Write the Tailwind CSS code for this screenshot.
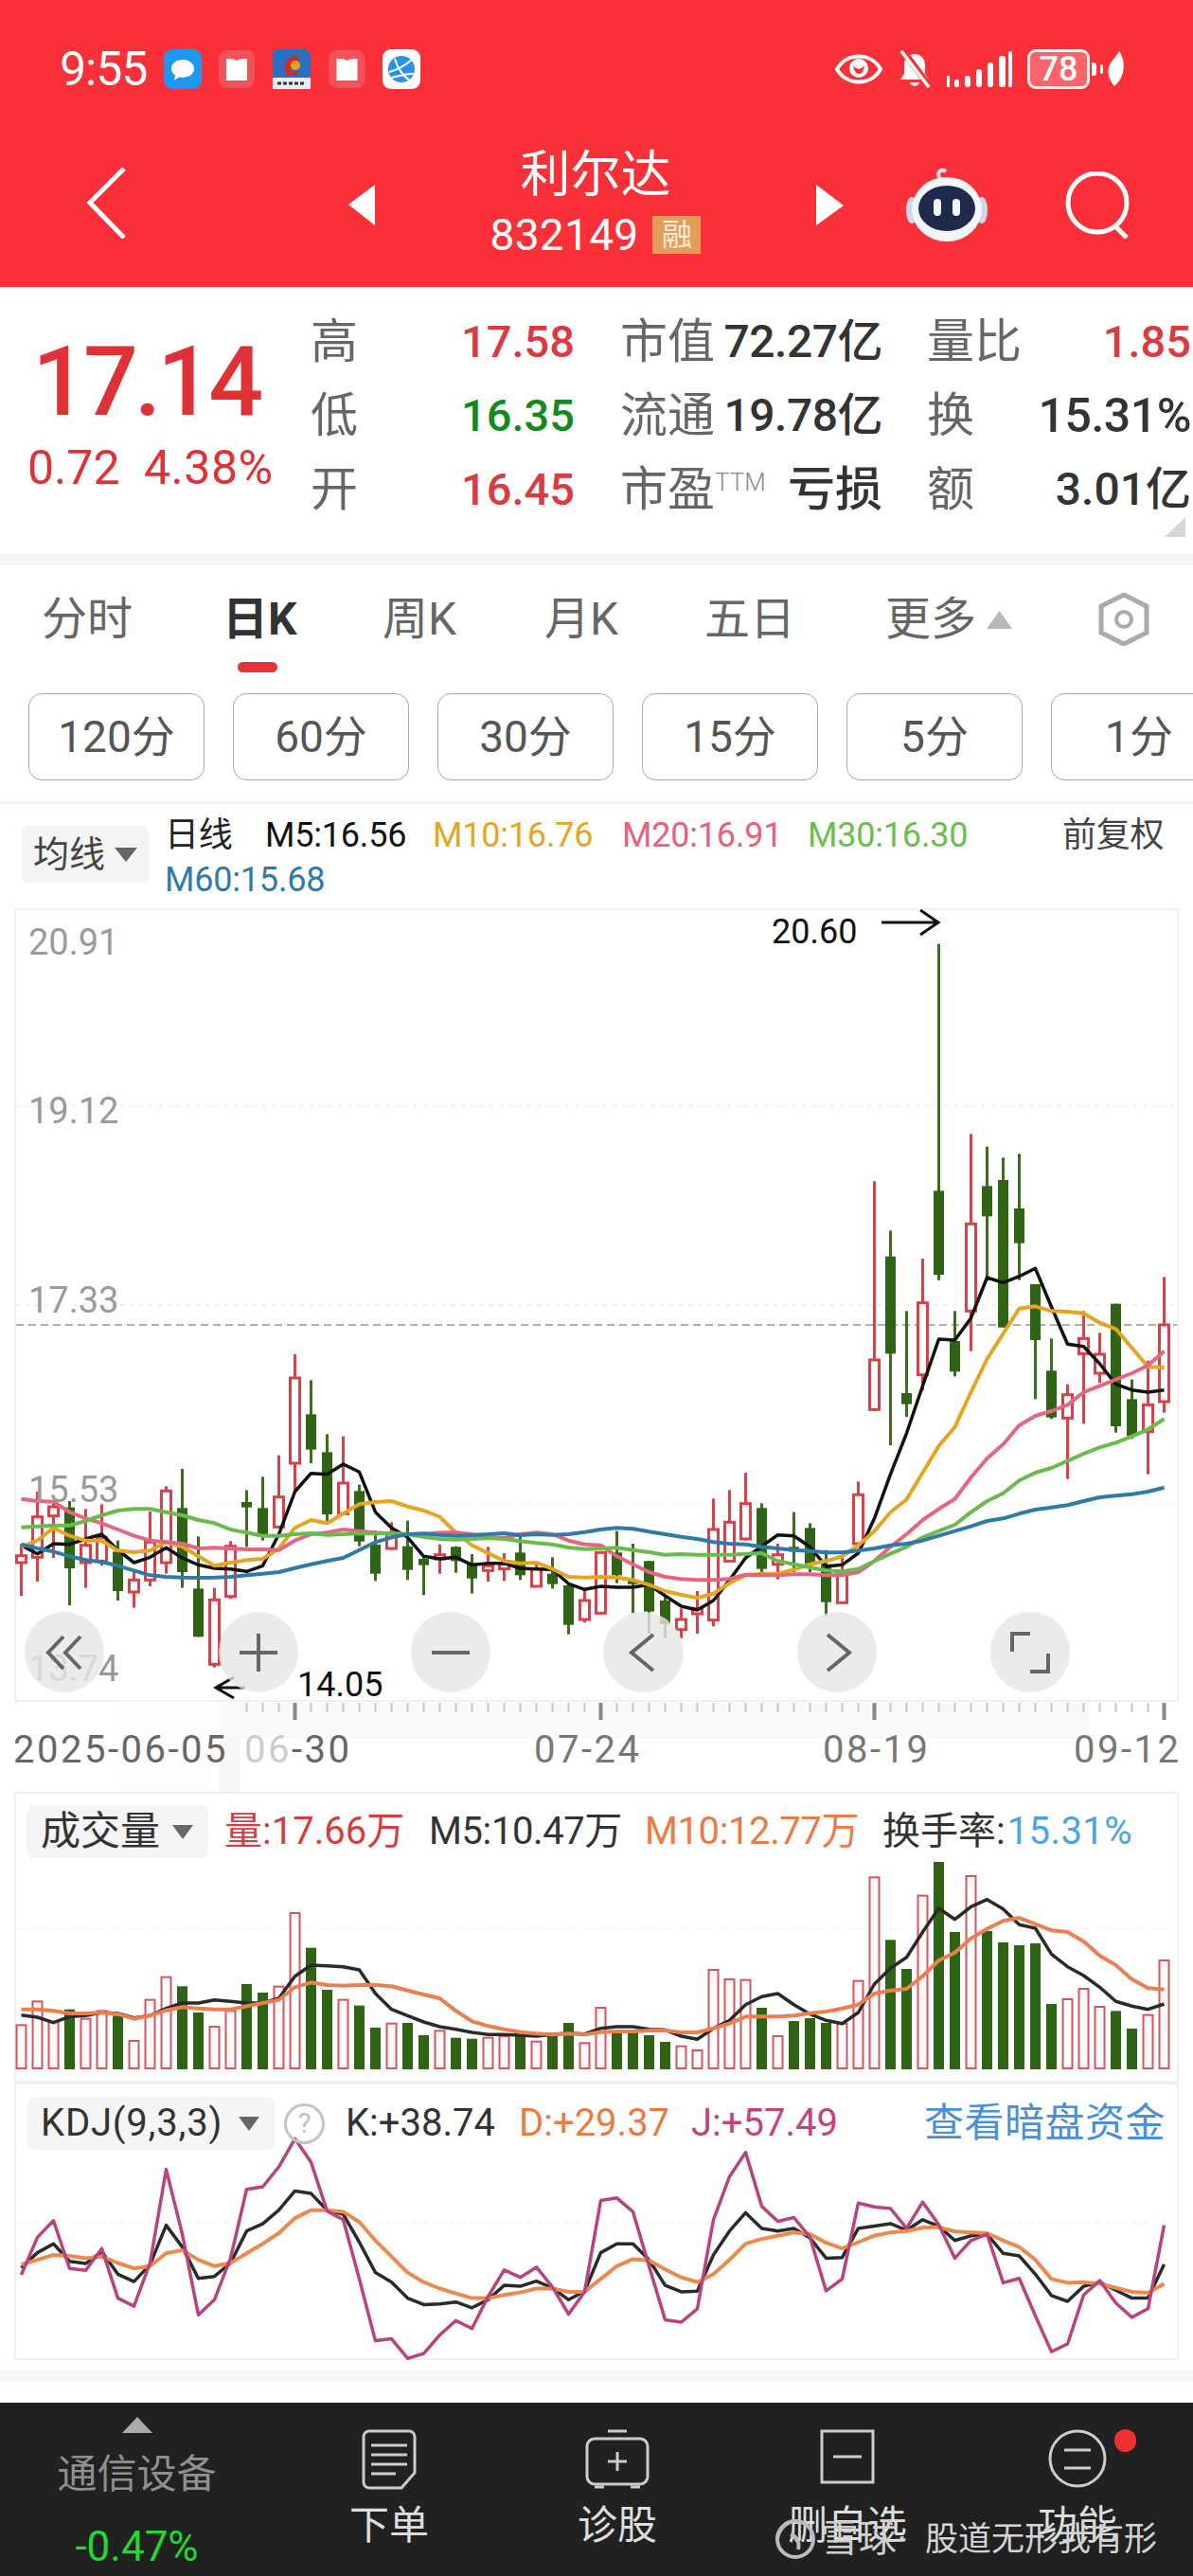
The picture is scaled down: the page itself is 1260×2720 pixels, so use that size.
<!doctype html>
<html lang="zh">
<head>
<meta charset="UTF-8" />
<meta name="viewport" content="width=device-width, initial-scale=1.0" />
<title>利尔达 832149</title>
<script src="https://cdn.jsdelivr.net/npm/@tailwindcss/browser@4"></script>
</head>
<body class="w-[1260px] h-[2720px] overflow-hidden bg-white font-[Roboto,'Noto_Sans_CJK_SC',sans-serif]">

<!-- red header -->
<header class="h-[303px] bg-[#fa3039] text-white">
  <div class="flex h-[146px] items-center">
    <span class="ml-[63px] w-[110px] text-[50px] leading-none tracking-[-1px]">9:55</span>
    <svg class="w-[40px] h-[42px]" viewBox="0 0 40 42"><rect width="40" height="42" rx="9" fill="#1d97f0"/><path d="M20 11c-7 0-12 4-12 9.500 0 3 1.500 5.500 4 7l-1 5 6-3c1 .2 2 .3 3 .3 7 0 12-4 12-9.300S27 11 20 11z" fill="#fff"/></svg>
    <svg class="ml-[18px] w-[38px] h-[40px]" viewBox="0 0 38 40"><rect width="38" height="40" rx="9" fill="#f4525a"/><path d="M8 9c4 0 8 0 11 2 3-2 7-2 11-2v23H8z" fill="#fff"/></svg>
    <svg class="ml-[19px] w-[40px] h-[42px]" viewBox="0 0 40 42"><rect width="40" height="42" rx="6" fill="#2a6fc0"/><rect y="30" width="40" height="12" fill="#e8eef5"/><path d="M26 6C14 8 10 18 14 25c4 5 12 3 15-3-4 3-9 3-10-1-1-5 4-9 9-8z" fill="#d42a20"/><circle cx="24" cy="17" r="5" fill="#f0a020"/><path d="M5 36h30" stroke="#333" stroke-width="3" stroke-dasharray="4 2"/></svg>
    <svg class="ml-[19px] w-[39px] h-[40px]" viewBox="0 0 38 40"><rect width="38" height="40" rx="9" fill="#f4525a"/><path d="M8 9c4 0 8 0 11 2 3-2 7-2 11-2v23H8z" fill="#fff"/></svg>
    <svg class="ml-[18px] w-[40px] h-[42px]" viewBox="0 0 40 42"><rect width="40" height="42" rx="9" fill="#fff"/><circle cx="20" cy="21" r="14" fill="#2a92e8"/><path d="M7 24c8-2 18-8 24-13M13 10c2 8 8 18 16 23M9 30c8-1 16-5 24-4" stroke="#fff" stroke-width="2" fill="none"/></svg>

    <svg class="ml-[438px] w-[50px] h-[38px]" viewBox="0 0 50 38"><path d="M2 19C12 1 38 1 48 19 38 37 12 37 2 19z" fill="none" stroke="#fff" stroke-width="4"/><circle cx="25" cy="18" r="10" fill="#fff"/><path d="M19 15c4 5 8 5 12 0-1 7-3 9-6 9s-5-3-6-9z" fill="#fa3039"/></svg>
    <svg class="ml-[16px] w-[37px] h-[40px]" viewBox="0 0 37 40"><path d="M18 4c-7 0-11 5-11 12v9l-4 6h30l-4-6v-9c0-7-4-12-11-12z" fill="#fff"/><path d="M13 34c1 5 9 5 10 0z" fill="#fff"/><path d="M6 1l27 36" stroke="#fa3039" stroke-width="7"/><path d="M4 1l29 38" stroke="#fff" stroke-width="3.500"/></svg>
    <svg class="ml-[15px] w-[69px] h-[38px]" viewBox="0 0 69 38" fill="#fff"><rect x="0" y="26" width="3" height="12"/><rect x="8" y="30" width="5" height="8" rx="2"/><rect x="19" y="26" width="6" height="12" rx="3"/><rect x="31" y="19" width="6" height="19" rx="3"/><rect x="43" y="12" width="6" height="26" rx="3"/><rect x="55" y="5" width="7" height="33" rx="3"/><rect x="65" y="0" width="4" height="38" rx="2"/></svg>
    <div class="relative ml-[16px] flex h-[42px] w-[66px] items-center justify-center rounded-[9px] border-[3px] border-white/90 bg-white/25 text-[36px] font-medium leading-none">78</div>
    <span class="ml-[2px] h-[14px] w-[5px] rounded-r-[3px] bg-white"></span>
    <span class="ml-[4px] h-[10px] w-[3px] rounded-full bg-white"></span>
    <svg class="ml-[3px] w-[20px] h-[40px]" viewBox="0 0 20 40"><path d="M14 1c6 8 6 20 2 28-2 4-5 7-7 9C2 30 0 20 6 12c3-4 6-7 8-11z" fill="#fff"/></svg>
  </div>
  <div class="flex h-[157px] items-start">
    <svg class="ml-[92px] mt-[31px] w-[41px] h-[75px]" viewBox="0 0 41 75"><path d="M39 1 3 37l36 37" fill="none" stroke="#fff" stroke-width="5"/></svg>
    <svg class="ml-[235px] mt-[49px] w-[28px] h-[43px]" viewBox="0 0 28 43"><path d="M28 0v43L0 21z" fill="#fff"/></svg>
    <div class="flex w-[466px] flex-col items-center mt-[10px]">
      <span class="h-[58px] text-[53px] leading-[58px]">利尔达</span>
      <div class="mt-[14px] flex items-center">
        <span class="text-[46px] leading-[40px] tracking-[.3px]">832149</span>
        <span class="ml-[15px] flex h-[40px] w-[51px] items-center justify-center bg-[#e59b5a] text-[32px] leading-none text-[#fdeeda]">融</span>
      </div>
    </div>
    <svg class="mt-[49px] w-[29px] h-[43px]" viewBox="0 0 29 43"><path d="M0 0v43l29-21z" fill="#fff"/></svg>
    <svg class="ml-[66px] mt-[29px] w-[86px] h-[80px]" viewBox="0 0 86 80">
      <path d="M36 14c-4-6 0-12 6-8" fill="none" stroke="#f4e4e8" stroke-width="4"/>
      <ellipse cx="6" cy="47" rx="6" ry="14" fill="#cfd6ee"/><ellipse cx="80" cy="47" rx="6" ry="14" fill="#cfd6ee"/>
      <ellipse cx="43" cy="46" rx="37" ry="34" fill="#f4f5fb"/>
      <ellipse cx="43" cy="45" rx="30" ry="24" fill="#1e2a4c"/>
      <rect x="29" y="35" width="8" height="18" rx="4" fill="#f4f5fb"/><rect x="49" y="35" width="8" height="18" rx="4" fill="#f4f5fb"/>
    </svg>
    <svg class="ml-[82px] mt-[35px] w-[72px] h-[71px]" viewBox="0 0 72 71"><circle cx="34" cy="33" r="31" fill="none" stroke="#fff" stroke-width="5"/><path d="M52 57l13 13" stroke="#fff" stroke-width="5"/></svg>
  </div>
</header>

<!-- quote -->
<section class="relative flex h-[282px] bg-white">
  <div class="w-[328px] pl-[34px] pt-[49px] text-[#df3237]">
    <div class="text-[102px] font-medium leading-[102px] tracking-[-4px]">17.14</div>
    <div class="mt-[15px] flex -ml-[5px] text-[50px] leading-[50px]"><span class="w-[123px]">0.72</span><span class="tracking-[.5px]">4.38%</span></div>
  </div>
  <div class="pt-[19px] text-[50px] leading-[78px] text-[#666]">
    <div class="flex h-[78px]">
      <div class="flex w-[279px] justify-between"><span>高</span><span class="text-[47px] font-medium text-[#d93b40]">17.58</span></div>
      <div class="ml-[48px] flex w-[277px] justify-between"><span>市值</span><span class="text-[48px] font-medium tracking-[-.5px] text-[#333]">72.27亿</span></div>
      <div class="ml-[47px] flex w-[279px] justify-between"><span>量比</span><span class="text-[47px] font-medium text-[#d93b40]">1.85</span></div>
    </div>
    <div class="flex h-[78px]">
      <div class="flex w-[279px] justify-between"><span>低</span><span class="text-[47px] font-medium text-[#128a1c]">16.35</span></div>
      <div class="ml-[48px] flex w-[277px] justify-between"><span>流通</span><span class="text-[48px] font-medium tracking-[-.5px] text-[#333]">19.78亿</span></div>
      <div class="ml-[47px] flex w-[279px] justify-between"><span>换</span><span class="text-[50px] font-medium tracking-[-.5px] text-[#333]">15.31%</span></div>
    </div>
    <div class="flex h-[78px]">
      <div class="flex w-[279px] justify-between"><span>开</span><span class="text-[47px] font-medium text-[#d93b40]">16.45</span></div>
      <div class="ml-[48px] flex w-[277px] justify-between"><span>市盈<sup class="text-[26px] font-light text-[#888] -top-[16px]">TTM</sup></span><span class="text-[50px] font-medium text-[#333]">亏损</span></div>
      <div class="ml-[47px] flex w-[279px] justify-between"><span>额</span><span class="text-[48px] font-medium text-[#333]">3.01亿</span></div>
    </div>
  </div>
  <svg class="absolute left-[1230px] top-[243px] w-[22px] h-[21px]" viewBox="0 0 22 21"><path d="M22 0v21H0z" fill="#d6d6d6"/></svg>
</section>
<div class="h-[12px] bg-[#f6f6f6]"></div>

<!-- period tabs -->
<nav class="flex h-[102px] items-center pt-[12px] pl-[44px] text-[48px] leading-none text-[#666]">
  <span class="w-[191px]">分时</span>
  <span class="w-[169px] font-bold text-[#333]">日K</span>
  <span class="w-[171px]">周K</span>
  <span class="w-[169px]">月K</span>
  <span class="w-[191px]">五日</span>
  <span class="w-[107px]">更多</span>
  <svg class="w-[27px] h-[19px]" viewBox="0 0 27 19"><path d="M13.500 0 27 19H0z" fill="#b9b9b9"/></svg>
  <svg class="ml-[90px] w-[56px] h-[56px]" viewBox="0 0 56 56"><path d="M28 2 52 14v28L28 54 4 42V14z" fill="none" stroke="#aaa" stroke-width="5"/><circle cx="28" cy="28" r="8" fill="none" stroke="#aaa" stroke-width="4"/></svg>
</nav>
<div class="ml-[251px] h-[11px] w-[42px] rounded-full bg-[#e6333a]"></div>
<div class="mt-[22px] flex gap-[30px] overflow-hidden pl-[30px] text-[46px] leading-none text-[#555]">
  <span class="flex h-[92px] w-[186px] shrink-0 items-center justify-center rounded-[14px] border border-[#aaa]">120分</span>
  <span class="flex h-[92px] w-[186px] shrink-0 items-center justify-center rounded-[14px] border border-[#aaa]">60分</span>
  <span class="flex h-[92px] w-[186px] shrink-0 items-center justify-center rounded-[14px] border border-[#aaa]">30分</span>
  <span class="flex h-[92px] w-[186px] shrink-0 items-center justify-center rounded-[14px] border border-[#aaa]">15分</span>
  <span class="flex h-[92px] w-[186px] shrink-0 items-center justify-center rounded-[14px] border border-[#aaa]">5分</span>
  <span class="flex h-[92px] w-[186px] shrink-0 items-center justify-center rounded-[14px] border border-[#aaa]">1分</span>
</div>
<div class="mt-[22px] h-[3px] bg-[#f2f2f2]"></div>

<!-- moving average legend -->
<div class="flex h-[110px] items-start">
  <div class="ml-[23px] mt-[23px] flex h-[60px] w-[134px] items-center rounded-[6px] bg-[#f5f4f4] pl-[12px] text-[38px] leading-none text-[#444]">
    <span class="w-[86px]">均线</span>
    <svg class="w-[24px] h-[15px]" viewBox="0 0 24 15"><path d="M0 0h24L12 15z" fill="#666"/></svg>
  </div>
  <div class="ml-[17px] mt-[10px] text-[36px] leading-[47px] tracking-[-.2px]">
    <div class="flex">
      <span class="w-[106px] text-[#222]">日线</span>
      <span class="w-[177px] text-[#111]">M5:16.56</span>
      <span class="w-[200px] text-[#e6a520]">M10:16.76</span>
      <span class="w-[196px] text-[#e8607c]">M20:16.91</span>
      <span class="w-[269px] text-[#68c04a]">M30:16.30</span>
      <span class="text-[#444]">前复权</span>
    </div>
    <div class="text-[#2f7ba8]">M60:15.68</div>
  </div>
</div>

<!-- candlestick chart -->
<section class="relative h-[838px]">
  <div class="absolute inset-y-0 left-[15px] right-[15px] border-2 border-[#f0f0f0]"></div>
  <svg id="kline" class="absolute inset-0 h-full w-full" viewBox="0 959 1260 838"></svg>
  <span class="absolute left-[30px] top-[14px] text-[38px] leading-[44px] text-[#9a9a9a]">20.91</span>
  <span class="absolute left-[30px] top-[192px] text-[38px] leading-[44px] text-[#9a9a9a]">19.12</span>
  <span class="absolute left-[30px] top-[392px] text-[38px] leading-[44px] text-[#9a9a9a]">17.33</span>
  <span class="absolute left-[30px] top-[592px] text-[38px] leading-[44px] text-[#9a9a9a]">15.53</span>
  <span class="absolute left-[30px] top-[781px] text-[38px] leading-[44px] text-[#9a9a9a]">13.74</span>
  <span class="absolute left-[815px] top-[3px] text-[36px] leading-[44px] text-[#111]">20.60</span>
  <span class="absolute left-[314px] top-[798px] text-[36px] leading-[44px] text-[#111]">14.05</span>
  <div class="absolute left-[26px] top-[743px] flex h-[85px] w-[84px] items-center justify-center rounded-full bg-[#e6e6e6]/80">
    <svg class="w-[42px] h-[42px]" viewBox="0 0 42 42"><path d="M20 4 4 21l16 17M38 4 22 21l16 17" fill="none" stroke="#666" stroke-width="4"/></svg>
  </div>
  <div class="absolute left-[231px] top-[743px] flex h-[85px] w-[84px] items-center justify-center rounded-full bg-[#e6e6e6]/80">
    <svg class="w-[42px] h-[42px]" viewBox="0 0 42 42"><path d="M1 21h40M21 1v40" stroke="#666" stroke-width="4"/></svg>
  </div>
  <div class="absolute left-[434px] top-[743px] flex h-[85px] w-[84px] items-center justify-center rounded-full bg-[#e6e6e6]/80">
    <svg class="w-[42px] h-[42px]" viewBox="0 0 42 42"><path d="M1 21h40" stroke="#666" stroke-width="4"/></svg>
  </div>
  <div class="absolute left-[637px] top-[743px] flex h-[85px] w-[85px] items-center justify-center rounded-full bg-[#e6e6e6]/80">
    <svg class="w-[42px] h-[42px]" viewBox="0 0 42 42"><path d="M31 2 8 21l23 19" fill="none" stroke="#666" stroke-width="4"/></svg>
  </div>
  <div class="absolute left-[842px] top-[743px] flex h-[85px] w-[84px] items-center justify-center rounded-full bg-[#e6e6e6]/80">
    <svg class="w-[42px] h-[42px]" viewBox="0 0 42 42"><path d="M11 2l23 19-23 19" fill="none" stroke="#666" stroke-width="4"/></svg>
  </div>
  <div class="absolute left-[1046px] top-[743px] flex h-[85px] w-[84px] items-center justify-center rounded-full bg-[#e6e6e6]/80">
    <svg class="w-[44px] h-[44px]" viewBox="0 0 44 44"><path d="M22 2H3v19M22 42h19V23" fill="none" stroke="#666" stroke-width="4"/></svg>
  </div>
</section>

<!-- time ruler and dates -->
<section class="relative h-[95px]">
  <div class="absolute left-[118px] top-[1px] h-[94px] w-[113px] bg-[#fdfdfd]"></div>
  <div class="absolute left-[231px] top-[1px] h-[38px] w-[920px] bg-[#f9f9f9]"></div>
  <div class="absolute left-[231px] top-[39px] h-[56px] w-[23px] bg-[#f7f7f7]"></div>
  <svg id="ruler" class="absolute inset-0 h-full w-full" viewBox="0 1797 1260 95"></svg>
  <div class="relative flex pl-[14px] pt-[31px] text-[40px] leading-[40px] tracking-[2.500px] text-[#666]">
    <span class="w-[244px]">2025-06-05</span>
    <span class="w-[306px]"><span class="text-[#ccc]">06</span>-30</span>
    <span class="w-[305px] text-[#777]">07-24</span>
    <span class="w-[265px] text-[#777]">08-19</span>
    <span class="text-[#777]">09-12</span>
  </div>
</section>

<!-- volume -->
<section class="relative h-[307px]">
  <div class="absolute inset-y-0 left-[15px] right-[15px] border-2 border-[#f0f0f0]"></div>
  <svg id="vol" class="absolute inset-0 h-full w-full" viewBox="0 1892 1260 307"></svg>
  <div class="relative flex items-center pt-[14px] pl-[28px] text-[40px] leading-none">
    <div class="flex h-[56px] w-[192px] items-center rounded-[8px] bg-[#f6f5f5] pl-[15px] text-[#333]">
      <span class="w-[139px] text-[42px]">成交量</span>
      <svg class="w-[22px] h-[15px]" viewBox="0 0 22 15"><path d="M0 0h22L11 15z" fill="#666"/></svg>
    </div>
    <span class="ml-[17px] w-[216px] text-[#d93b40]">量:17.66万</span>
    <span class="w-[228px] text-[#333] tracking-[-.4px]">M5:10.47万</span>
    <span class="w-[251px] text-[#ea7b45] tracking-[-.4px]">M10:12.77万</span>
    <span class="text-[#333]">换手率:<span class="ml-[2px] text-[#4aa5dd] tracking-[.4px]">15.31%</span></span>
  </div>
</section>

<!-- KDJ -->
<section class="relative h-[293px]">
  <div class="absolute inset-y-0 left-[15px] right-[15px] border-2 border-[#f0f0f0]"></div>
  <svg id="kdj" class="absolute inset-0 h-full w-full" viewBox="0 2199 1260 293"></svg>
  <div class="relative flex items-center pt-[15px] pl-[29px] text-[40px] leading-none">
    <div class="flex h-[56px] w-[262px] items-center rounded-[8px] bg-[#f6f5f5] pl-[14px] text-[#333]">
      <span class="w-[209px] tracking-[.8px]">KDJ(9,3,3)</span>
      <svg class="w-[22px] h-[15px]" viewBox="0 0 22 15"><path d="M0 0h22L11 15z" fill="#666"/></svg>
    </div>
    <span class="ml-[9px] flex h-[43px] w-[43px] items-center justify-center rounded-full border-[3px] border-[#c4c4c4] text-[30px] text-[#c0c0c0]">?</span>
    <span class="ml-[22px] w-[183px] text-[#333]">K:+38.74</span>
    <span class="w-[182px] text-[#ea7b3f]">D:+29.37</span>
    <span class="w-[246px] text-[#c2447f]">J:+57.49</span>
    <span class="text-[42px] tracking-[.5px] text-[#4a8fd8]">查看暗盘资金</span>
  </div>
</section>

<div class="h-[11px]"></div>
<div class="h-[12px] bg-[#f7f7f7]"></div>
<div class="h-[22px]"></div>

<!-- bottom bar -->
<footer class="relative flex h-[183px] whitespace-nowrap bg-[#212121] text-[42px] leading-none text-[#ddd]">
  <div class="flex w-[289px] flex-col items-center">
    <svg class="mt-[15px] w-[32px] h-[17px]" viewBox="0 0 32 17"><path d="M16 0l16 17H0z" fill="#aaa"/></svg>
    <span class="mt-[23px] text-[#8f8f8f]">通信设备</span>
    <span class="mt-[33px] text-[44px] text-[#1edb2f]">-0.47%</span>
  </div>
  <div class="ml-[61px] flex w-[122px] flex-col items-center pt-[28px]">
    <svg class="w-[58px] h-[64px]" viewBox="0 0 58 64"><path d="M8 2h42a6 6 0 0 1 6 6v38L42 62H8a6 6 0 0 1-6-6V8a6 6 0 0 1 6-6z" fill="none" stroke="#ccc" stroke-width="3"/><path d="M10 17h38M10 27h38M10 37h38M10 47h26" stroke="#ccc" stroke-width="3"/></svg>
    <span class="mt-[17px]">下单</span>
  </div>
  <div class="ml-[119px] flex w-[122px] flex-col items-center pt-[28px]">
    <svg class="w-[68px] h-[64px]" viewBox="0 0 68 64"><path d="M24 2h20" stroke="#ccc" stroke-width="3"/><rect x="2" y="10" width="64" height="48" rx="8" fill="none" stroke="#ccc" stroke-width="3"/><path d="M24 34h20M34 24v20M10 61h10M48 61h10" stroke="#ccc" stroke-width="3"/></svg>
    <span class="mt-[17px]">诊股</span>
  </div>
  <div class="ml-[119px] flex w-[126px] flex-col items-center pt-[28px]">
    <svg class="w-[58px] h-[58px] mb-[6px]" viewBox="0 0 58 58"><rect x="2" y="2" width="54" height="54" fill="none" stroke="#ccc" stroke-width="3"/><path d="M14 29h30" stroke="#ccc" stroke-width="3"/></svg>
    <span class="mt-[17px]">删自选</span>
  </div>
  <div class="ml-[135px] flex w-[90px] flex-col items-center pt-[28px]">
    <svg class="w-[62px] h-[62px] mb-[2px]" viewBox="0 0 62 62"><circle cx="31" cy="31" r="29" fill="none" stroke="#ccc" stroke-width="3"/><path d="M17 22h28M17 41h28" stroke="#ccc" stroke-width="3"/></svg>
    <span class="mt-[17px]">功能</span>
  </div>
  <span class="absolute left-[1177px] top-[28px] h-[24px] w-[23px] rounded-full bg-[#ee2f2f]"></span>
  <!-- watermark -->
  <div class="absolute left-[815px] top-[121px] flex items-center">
    <svg class="w-[46px] h-[46px]" viewBox="0 0 46 46"><circle cx="25" cy="23" r="19" fill="none" stroke="#bbb" stroke-width="4"/><path d="M6 22c2-10 10-18 20-18M20 18c6 2 10 8 8 16" fill="none" stroke="#bbb" stroke-width="4"/></svg>
    <span class="ml-[6px] text-[40px] text-[#cfcfcf]">雪球</span>
    <span class="ml-[1px] w-[29px] text-[36px] text-[#cfcfcf]">·</span>
    <span class="text-[35px] leading-[35px] text-[#d4d4d4]">股道无形我有形</span>
  </div>
</footer>

<script>
// [high, bodyTop, bodyBottom, low] in zoom units, r = hollow red, g = solid green
const candles = [
  [690,728,750,855,'r'],[525,605,733,810,'r'],[555,573,602,735,'r'],[555,575,768,885,'g'],[580,695,750,830,'r'],[565,670,745,760,'r'],
  [680,715,840,870,'g'],[780,805,843,893,'r'],[588,685,805,825,'r'],[508,523,750,785,'r'],[453,577,780,830,'g'],[667,832,985,985,'g'],
  [830,868,1072,1082,'r'],[682,698,857,865,'r'],[520,558,575,700,'g'],[478,577,668,680,'g'],[410,542,637,640,'r'],[90,165,435,520,'r'],
  [172,280,392,435,'g'],[343,400,597,622,'g'],[350,498,595,595,'r'],[503,523,683,698,'g'],[648,693,785,808,'g'],[622,660,705,710,'r'],
  [617,698,773,805,'g'],[735,738,758,853,'g'],[692,725,738,785,'r'],[698,700,745,782,'g'],[723,755,800,848,'g'],[700,760,775,810,'r'],
  [720,755,770,808,'r'],[665,718,790,805,'g'],[750,770,825,825,'r'],[733,785,818,832,'g'],[815,822,947,977,'g'],[830,870,930,940,'r'],
  [720,718,910,910,'r'],[650,718,790,815,'g'],[690,805,818,910,'g'],[745,745,905,975,'g'],[850,870,945,990,'g'],[895,930,962,990,'r'],
  [840,895,912,975,'r'],[547,645,932,952,'r'],[520,622,745,748,'r'],[465,563,675,680,'r'],[562,577,770,780,'g'],[690,725,755,803,'r'],
  [590,700,715,780,'g'],[625,640,755,780,'g'],[710,755,875,920,'g'],[730,785,877,877,'r'],[493,535,690,695,'r'],[-458,108,265,270,'r'],
  [-302,-220,88,378,'g'],[-47,213,248,288,'g'],[-213,-73,155,205,'r'],[-1210,-428,-162,-145,'g'],[-47,48,145,160,'g'],[-608,-323,-47,80,'r'],
  [-568,-443,-347,-150,'g'],[-533,-462,5,5,'g'],[-545,-372,-262,-145,'g'],[-132,-132,45,232,'g'],[40,142,290,295,'g'],[185,218,292,485,'r'],
  [-47,40,88,310,'r'],[22,90,150,180,'r'],[-70,-70,318,338,'g'],[170,232,348,358,'g'],[110,250,335,470,'r'],[-155,-3,240,275,'r'],
];
const ma5 = [695,722,690,692,675,660,710,750,733,703,735,757,768,770,778,760,660,525,467,470,438,463,590,640,670,730,738,733,757,752,752,768,770,772,817,835,825,828,828,820,855,888,900,870,805,735,698,662,665,700,762,757,720,610,470,340,190,42,45,-25,-153,-137,-157,-182,-60,58,65,120,185,203,210,203];
const ma10 = [700,680,640,665,680,680,712,717,712,685,700,730,760,750,742,738,705,640,615,625,595,565,558,555,572,585,605,655,695,720,745,752,750,770,795,797,795,797,805,820,840,852,862,848,815,790,785,785,772,755,745,730,695,650,590,550,465,380,320,210,105,25,-55,-62,-47,-45,-40,-10,10,70,130,132];
const ma20 = [548,555,557,590,610,625,645,665,680,685,690,705,703,705,708,708,710,680,660,655,645,650,655,658,660,660,655,655,660,668,672,660,655,660,680,692,695,730,755,780,795,802,805,805,802,788,790,790,787,787,790,790,780,745,700,660,615,580,548,480,420,375,315,285,270,250,210,190,170,150,125,80];
const ma30 = [638,635,632,632,618,600,585,580,580,590,600,615,625,645,655,665,665,660,657,662,660,657,658,658,660,668,675,677,675,672,675,682,688,692,702,707,705,703,710,717,725,723,725,725,725,722,720,745,755,765,775,778,770,745,722,700,670,650,630,590,555,530,490,465,450,428,405,385,370,350,328,295];
const ma60 = [692,705,715,730,742,748,760,775,790,795,797,798,797,795,790,785,780,767,755,745,735,710,685,670,660,658,662,665,663,660,657,663,660,662,660,653,645,640,643,652,660,668,675,685,690,692,700,705,710,713,718,718,712,705,695,690,680,665,650,635,618,610,595,582,575,568,555,543,538,533,525,512];

const vol = [[865,'r'],[790,'r'],[855,'r'],[815,'g'],[845,'r'],[820,'r'],[835,'g'],[915,'r'],[785,'r'],[713,'r'],[742,'g'],[825,'g'],[870,'r'],[820,'r'],[735,'g'],[762,'g'],[743,'r'],[510,'r'],[620,'g'],[753,'g'],[785,'r'],[803,'g'],[873,'g'],[860,'r'],[858,'g'],[897,'g'],[883,'r'],[905,'g'],[908,'g'],[905,'r'],[900,'r'],[900,'g'],[917,'r'],[890,'g'],[858,'g'],[922,'r'],[810,'r'],[885,'g'],[880,'g'],[897,'g'],[918,'g'],[932,'r'],[945,'r'],[690,'r'],[720,'r'],[722,'r'],[810,'g'],[900,'r'],[852,'g'],[843,'g'],[858,'g'],[860,'r'],[725,'r'],[397,'r'],[595,'g'],[687,'g'],[455,'r'],[348,'g'],[570,'g'],[393,'r'],[567,'g'],[603,'g'],[612,'g'],[606,'g'],[798,'g'],[783,'r'],[750,'r'],[807,'r'],[820,'g'],[876,'g'],[833,'r'],[660,'r']];
const volM5 = [833,840,857,838,835,825,828,842,835,812,795,795,785,790,795,795,780,710,675,677,680,690,765,815,835,855,870,878,888,895,895,897,900,895,890,893,875,870,870,878,880,900,910,875,850,800,775,765,800,830,850,860,825,735,685,650,570,495,530,490,467,497,547,558,640,680,708,745,790,805,815,798];
const volM10 = [815,815,820,828,828,825,830,845,835,818,808,812,815,815,805,795,785,745,730,738,740,738,738,742,755,768,780,820,853,868,878,887,892,895,892,895,887,885,885,882,882,888,888,875,860,838,838,838,835,827,822,812,800,765,755,750,710,660,635,590,560,535,525,545,565,570,600,645,675,720,748,752];

const kK = [605,558,530,585,592,555,625,648,595,472,540,638,632,590,490,468,425,365,373,425,438,525,620,650,700,720,718,712,730,705,660,663,647,668,705,678,558,530,530,580,660,680,678,565,490,433,482,490,482,512,575,573,482,475,467,488,455,475,520,505,500,560,568,625,692,710,663,650,675,700,700,595];
const kD = [595,580,565,568,575,570,590,607,600,560,550,580,600,590,560,530,497,450,425,425,430,462,520,570,620,650,670,685,700,700,690,682,670,670,680,680,640,600,578,582,610,635,650,625,580,530,515,505,495,500,527,545,525,505,495,490,480,478,492,495,497,520,540,580,640,652,650,655,668,680,683,655];
const kJ = [627,510,458,607,613,545,700,725,590,298,500,752,705,575,360,352,290,202,275,428,455,640,833,827,888,873,815,770,795,695,612,635,603,665,750,680,395,387,430,600,768,775,733,455,320,245,413,460,448,510,677,640,403,415,420,482,400,470,575,520,500,652,638,755,867,843,690,645,715,760,733,472];

const X = i => 22.5 + 17 * i;
const mainY = z => 1400 + z / 3;
const volY = z => 1850 + z / 3;
const kdjY = z => 2190 + z / 2.958;

function line(data, toY, color, width) {
  const pts = data.map((z, i) => X(i) + ',' + toY(z).toFixed(1)).join(' ');
  return `<polyline points="${pts}" fill="none" stroke="${color}" stroke-width="${width}" stroke-linejoin="round"/>`;
}
function grid(y, color, dash, width) {
  return `<line x1="17" x2="1243" y1="${y}" y2="${y}" stroke="${color}" stroke-width="${width}" stroke-dasharray="${dash}"/>`;
}

let parts = [grid(1168, '#e2e2e2', '4 6', 1), grid(1378, '#e2e2e2', '4 6', 1), grid(1588, '#ececec', '4 6', 1), grid(1399, '#b0b0a8', '8 5', 2)];
candles.forEach((c, i) => {
  const x = X(i), [hi, top, bot, lo, kind] = c;
  if (kind === 'r') {
    parts.push(`<line x1="${x}" x2="${x}" y1="${mainY(hi)}" y2="${mainY(top)}" stroke="#dd3f49" stroke-width="3"/>`);
    parts.push(`<line x1="${x}" x2="${x}" y1="${mainY(bot)}" y2="${mainY(lo)}" stroke="#dd3f49" stroke-width="3"/>`);
    parts.push(`<rect x="${x - 5}" y="${mainY(top)}" width="10" height="${Math.max((bot - top) / 3, 3)}" fill="#fff" stroke="#dd3f49" stroke-width="3"/>`);
  } else {
    parts.push(`<line x1="${x}" x2="${x}" y1="${mainY(hi)}" y2="${mainY(lo)}" stroke="#3c6e1c" stroke-width="3"/>`);
    parts.push(`<rect x="${x - 5.5}" y="${mainY(top)}" width="11" height="${Math.max((bot - top) / 3, 3)}" fill="#2f6414"/>`);
  }
});
parts.push(line(ma5, mainY, '#111', 3.5), line(ma10, mainY, '#e6a520', 4), line(ma20, mainY, '#e4667f', 4), line(ma30, mainY, '#68bb4c', 4), line(ma60, mainY, '#2f7ba8', 4));
// high and low markers
parts.push('<path d="M931 974h58M972 961l19 13-19 13" fill="none" stroke="#111" stroke-width="3"/>');
parts.push('<path d="M229 1782h30M247 1771l-19 11 19 11" fill="none" stroke="#111" stroke-width="3"/>');
document.getElementById('kline').innerHTML = parts.join('');

parts = [];
for (let i = 14; i < 72; i++) {
  const major = i === 17 || i === 36 || i === 53 || i === 71;
  parts.push(major
    ? `<rect x="${X(i) - 2}" y="1798" width="4" height="18" fill="#888"/>`
    : `<rect x="${X(i) - 1}" y="1798" width="2" height="10" fill="#c8c8c8"/>`);
}
document.getElementById('ruler').innerHTML = parts.join('');

parts = [grid(2037, '#eee', '4 6', 1)];
vol.forEach((v, i) => {
  const x = X(i), top = volY(v[0]), base = 2184;
  parts.push(v[1] === 'r'
    ? `<rect x="${x - 5}" y="${top}" width="10" height="${base - top}" fill="#fffafa" stroke="#d4545f" stroke-width="2"/>`
    : `<rect x="${x - 5.5}" y="${top}" width="11" height="${base - top + 1}" fill="#2f6414"/>`);
});
parts.push(line(volM5, volY, '#2a2a2a', 3.5), line(volM10, volY, '#ea8050', 4));
document.getElementById('vol').innerHTML = parts.join('');

document.getElementById('kdj').innerHTML = [
  grid(2346, '#eee', '4 6', 1),
  line(kK, kdjY, '#2a2a2a', 3.5), line(kD, kdjY, '#ea8a4c', 4), line(kJ, kdjY, '#b8437f', 3.5),
].join('');
</script>
</body>
</html>
